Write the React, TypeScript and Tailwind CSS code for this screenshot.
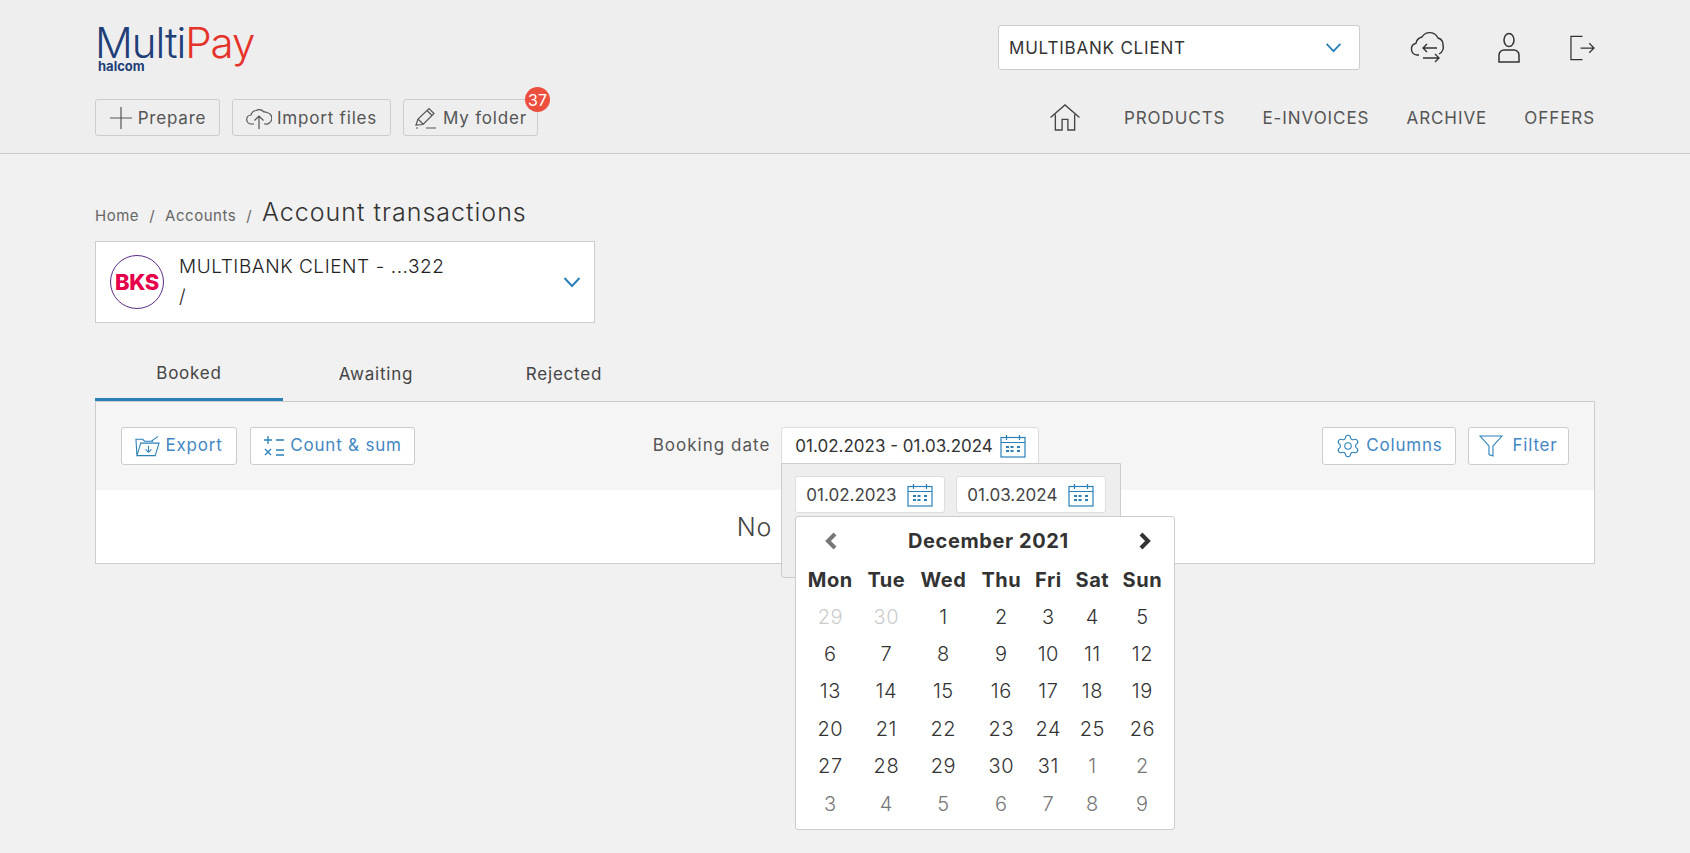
import { Settings } from "lucide-react";
import type { ReactNode } from "react";

const blue = "#2980b9";

function Chevron({ className }: { className?: string }) {
  return (
    <svg viewBox="0 0 18 12" className={className} fill="none" stroke={blue} strokeWidth="2">
      <path d="M1.5 2l7.5 8 7.500-8" />
    </svg>
  );
}

function CalendarIcon() {
  return (
    <svg viewBox="0 0 26 24" className="h-6 w-[26px] shrink-0" fill="none" stroke={blue} strokeWidth="1.2">
      <rect x="1" y="3.5" width="24" height="19.5" />
      <path d="M1 8.5h24M6.5 1v5M19.5 1v5" />
      <path
        d="M6 12h3v2H6zM10.5 12h3v2h-3zM17 12h3v2h-3zM6 16h3v2H6zM10.5 16h3v2h-3zM17 16h3v2h-3z"
        fill={blue}
        stroke="none"
      />
    </svg>
  );
}

function ToolButton({ icon, label, blueText, className }: { icon: ReactNode; label: string; blueText?: boolean; className: string }) {
  return (
    <button
      className={`flex items-center justify-center gap-[5px] rounded-[3px] border border-[#ccc] text-[17px] ${
        blueText ? "h-[38px] bg-white text-[#4387c5]" : "h-[37px] bg-[#eee] pt-[1px] text-[#555]"
      } ${className}`}
    >
      {icon}
      <span className={blueText ? "" : "pt-[1px]"}>{label}</span>
    </button>
  );
}

const weekDays = ["Mon", "Tue", "Wed", "Thu", "Fri", "Sat", "Sun"];

const rows = [
  [29, 30, 1, 2, 3, 4, 5],
  [6, 7, 8, 9, 10, 11, 12],
  [13, 14, 15, 16, 17, 18, 19],
  [20, 21, 22, 23, 24, 25, 26],
  [27, 28, 29, 30, 31, 1, 2],
  [3, 4, 5, 6, 7, 8, 9],
];

function dayColor(row: number, col: number) {
  if (row === 0 && col < 2) return "text-[#ccc]";
  if (row === 5 || (row === 4 && col > 4)) return "text-[#777]";
  return "text-[#333]";
}

function DatePopup() {
  return (
    <div className="absolute left-0 top-[36px] z-10 h-[115px] w-[340px] rounded-b-[3px] border border-[#ccc] bg-[#eee]">
      <div className="ml-[13px] mt-[12px] flex gap-[11px]">
        {["01.02.2023", "01.03.2024"].map((d) => (
          <div
            key={d}
            className="flex h-[37px] w-[150px] items-center justify-between rounded-[3px] border border-[#ddd] bg-white pl-[10px] pr-[11px] text-[17px] tracking-normal text-[#444]"
          >
            <span className="pt-[2px]">{d}</span>
            <CalendarIcon />
          </div>
        ))}
      </div>
      <div className="absolute left-[13px] top-[52px] h-[314px] w-[380px] rounded-[3px] border border-[#ccc] bg-white pl-[6px]">
        <div className="relative flex h-[44px] items-center justify-center pt-[3px] text-[20px] font-bold tracking-[0.03em] text-[#333]">
          <svg viewBox="0 0 14 18" className="absolute left-[22px] top-[15px] h-[18px] w-[14px]" fill="none" stroke="#777" strokeWidth="4">
            <path d="M11 2L4 9l7 7" />
          </svg>
          December 2021
          <svg viewBox="0 0 14 18" className="absolute left-[336px] top-[15px] h-[18px] w-[14px]" fill="none" stroke="#333" strokeWidth="4">
            <path d="M3 2l7 7-7 7" />
          </svg>
        </div>
        <div className="grid grid-cols-[56px_56px_58px_58px_36px_52px_48px] text-center tracking-[0.035em]">
          {weekDays.map((d) => (
            <div key={d} className="flex h-[37px] items-center justify-center whitespace-nowrap text-[20px] font-bold text-[#333]">
              {d}
            </div>
          ))}
          {rows.map((row, r) =>
            row.map((n, c) => (
              <div key={`${r}-${c}`} className={`flex h-[37.4px] items-center justify-center text-[20px] font-light ${dayColor(r, c)}`}>
                {n}
              </div>
            )),
          )}
        </div>
      </div>
    </div>
  );
}

export default function App() {
  return (
    <div className="min-h-[853px] bg-[#f1f1f1] tracking-[0.05em] text-[#333] [font-family:Inter,'Liberation_Sans',sans-serif]">
      <header className="h-[154px] border-b border-[#ccc] bg-[#eee]">
        <div className="mx-auto w-[1500px]">
          <div className="flex h-[99px] items-start justify-between pt-[25px]">
            <div className="relative h-[48px] w-[165px] tracking-[-0.065em]">
              <div className="mt-[1px] text-[42px] font-light leading-[34px]">
                <span className="text-[#1f3f78]">Multi</span>
                <span className="text-[#e5332a]">Pay</span>
              </div>
              <div className="absolute left-[3px] top-[35px] text-[13px] font-bold leading-[12px] tracking-normal text-[#1f3f78]">halcom</div>
            </div>
            <div className="flex items-center">
              <div className="flex h-[45px] w-[362px] items-center justify-between rounded-[3px] border border-[#ccc] bg-white pl-[10px] pr-[17px] text-[17px] text-[#333]">
                <span className="pt-[2px]">MULTIBANK CLIENT</span>
                <Chevron className="h-[11px] w-[17px]" />
              </div>
              <svg viewBox="0 0 38 34" className="ml-[50px] h-[34px] w-[38px]" fill="none" stroke="#333" strokeWidth="1.4">
                <path d="M9 24H7a6 6 0 0 1-1-11.800A8 8 0 0 1 12 6a9 9 0 0 1 16 1 7 7 0 0 1 5 7 8 8 0 0 1-4 9" />
                <path d="M27 17H13M17 13l-4 4 4 4M13 27h16M25 23l4 4-4 4" />
              </svg>
              <svg viewBox="0 0 24 32" className="ml-[49px] h-[32px] w-[24px]" fill="none" stroke="#333" strokeWidth="1.5">
                <ellipse cx="12" cy="8" rx="5" ry="6.500" />
                <path d="M2 30v-7a5 5 0 0 1 5-5h10a5 5 0 0 1 5 5v7z" />
              </svg>
              <svg viewBox="0 0 26 26" className="ml-[49px] h-[26px] w-[25px]" fill="none" stroke="#333" strokeWidth="1.300">
                <path d="M13 1H1v24h12M11 13h14M20 8l5 5-5 5" />
              </svg>
            </div>
          </div>
          <div className="flex h-[37px] items-center justify-between">
            <div className="flex gap-[12px]">
              <ToolButton
                className="w-[125px]"
                label="Prepare"
                icon={
                  <svg viewBox="0 0 24 24" className="h-[24px] w-[24px]" fill="none" stroke="#555" strokeWidth="1.200">
                    <path d="M12 1v22M1 12h22" />
                  </svg>
                }
              />
              <ToolButton
                className="w-[159px]"
                label="Import files"
                icon={
                  <svg viewBox="0 0 26 24" className="h-[24px] w-[26px]" fill="none" stroke="#555" strokeWidth="1.200">
                    <path d="M8 18H5.500a4.500 4.500 0 0 1-.5-9 6 6 0 0 1 5-4.500 7 7 0 0 1 8 1.500 6 6 0 0 1 3 .5 5.500 5.500 0 0 1-2 11.500h-1" />
                    <path d="M13 23V10M8.500 14.500L13 10l4.500 4.500" />
                  </svg>
                }
              />
              <div className="relative">
                <ToolButton
                  className="w-[135px]"
                  label="My folder"
                  icon={
                    <svg viewBox="0 0 24 24" className="h-[24px] w-[24px]" fill="none" stroke="#555" strokeWidth="1.200">
                      <path d="M2 19l2-6L15 2.500l5 5L9 18.500zM4 13l5 5M13 4.500l5 5M12 22h10M2 22h2" />
                    </svg>
                  }
                />
                <span className="absolute right-[-12px] top-[-12px] flex h-[25px] w-[25px] items-center justify-center rounded-full bg-[#ec4f3d] text-[16px] tracking-normal text-white">
                  37
                </span>
              </div>
            </div>
            <nav className="flex items-center text-[17px] tracking-[0.055em] text-[#555]">
              <svg viewBox="0 0 32 28" className="mr-[43px] h-[27px] w-[32px]" fill="none" stroke="#444" strokeWidth="1.400">
                <path d="M1 14L16 1l15 13M6 11v16h7V16h6v11h7V11" />
              </svg>
              <span className="pt-[2px]">PRODUCTS</span>
              <span className="ml-[37px] pt-[2px]">E-INVOICES</span>
              <span className="ml-[37px] pt-[2px]">ARCHIVE</span>
              <span className="ml-[37px] pt-[2px]">OFFERS</span>
            </nav>
          </div>
        </div>
      </header>

      <main className="mx-auto w-[1500px]">
        <div className="flex h-[87px] items-baseline pt-[40px] text-[15px] tracking-[0.035em] text-[#666]">
          <span>Home</span>
          <span className="mx-[10px]">/</span>
          <span>Accounts</span>
          <span className="mx-[10px]">/</span>
          <span className="text-[25px] font-light tracking-[0.04em] text-[#333]">Account transactions</span>
        </div>

        <div className="flex h-[82px] w-[500px] items-center border border-[#ccc] bg-white pl-[14px] pr-[13px]">
          <div className="flex h-[54px] w-[54px] shrink-0 items-center justify-center rounded-full border-[1.5px] border-[#5b2a86] text-[22px] font-extrabold tracking-[-0.02em] text-[#e6004c]">
            BKS
          </div>
          <div className="ml-[15px] grow text-[19px] font-light leading-[30px] tracking-[0.03em] text-[#222]">
            <div>MULTIBANK CLIENT - ...322</div>
            <div>/</div>
          </div>
          <Chevron className="h-[12px] w-[18px]" />
        </div>

        <div className="flex h-[78px] text-[17px] text-[#444]">
          <div className="flex w-[188px] items-end justify-center border-b-[3px] border-[#2980b9] pb-[12px]">Booked</div>
          <div className="flex w-[186px] items-end justify-center pb-[14px]">Awaiting</div>
          <div className="flex w-[190px] items-end justify-center pb-[14px]">Rejected</div>
        </div>

        <section className="h-[163px] border border-t-0 border-[#ccc] bg-white shadow-[inset_0_1px_0_#ccc]">
          <div className="grid h-[89px] grid-cols-[1fr_auto_1fr] bg-[#f5f5f5] px-[25px] pt-[26px] shadow-[inset_0_1px_0_#ccc]">
            <div className="flex gap-[13px]">
              <ToolButton
                blueText
                className="w-[116px]"
                label="Export"
                icon={
                  <svg viewBox="0 0 26 22" className="h-[22px] w-[25px]" fill="none" stroke={blue} strokeWidth="1.100">
                    <path d="M2 21L1 4h7l2 2h9M2 21h19l4-13H6L2 21zM14 11v6M11 14.500l3 3 3-3M17 6l7-5" />
                  </svg>
                }
              />
              <ToolButton
                blueText
                className="w-[165px]"
                label="Count & sum"
                icon={
                  <svg viewBox="0 0 22 22" className="h-[22px] w-[22px]" fill="none" stroke={blue} strokeWidth="1.300">
                    <path d="M1 5h8M5 1v8M13 5h8M2 14l6 6M8 14l-6 6M13 15h8M13 20h8" />
                  </svg>
                }
              />
            </div>
            <div className="ml-[2px] flex items-start">
              <span className="mr-[11px] flex h-[38px] items-center text-[17px] tracking-[0.06em] text-[#555]">Booking date</span>
              <div className="relative">
                <div className="flex h-[37px] w-[258px] items-center justify-between whitespace-nowrap rounded-t-[3px] border border-[#ddd] bg-white pl-[13px] pr-[12px] text-[17px] tracking-normal text-[#333]">
                  <span className="pt-[2px]">01.02.2023 - 01.03.2024</span>
                  <CalendarIcon />
                </div>
                <DatePopup />
              </div>
            </div>
            <div className="flex justify-end gap-[12px]">
              <ToolButton blueText className="w-[134px]" label="Columns" icon={<Settings size={26} strokeWidth={1} color={blue} />} />
              <ToolButton
                blueText
                className="w-[101px]"
                label="Filter"
                icon={
                  <svg viewBox="0 0 24 24" className="mr-[4px] h-[24px] w-[24px]" fill="none" stroke={blue} strokeWidth="1.100">
                    <path d="M1 2h22l-9 10v10l-4-1.500V12z" />
                  </svg>
                }
              />
            </div>
          </div>
          <div className="flex h-[73px] items-center justify-center pt-[2px] text-[25px] font-light text-[#444]">No records found</div>
        </section>
      </main>
    </div>
  );
}
